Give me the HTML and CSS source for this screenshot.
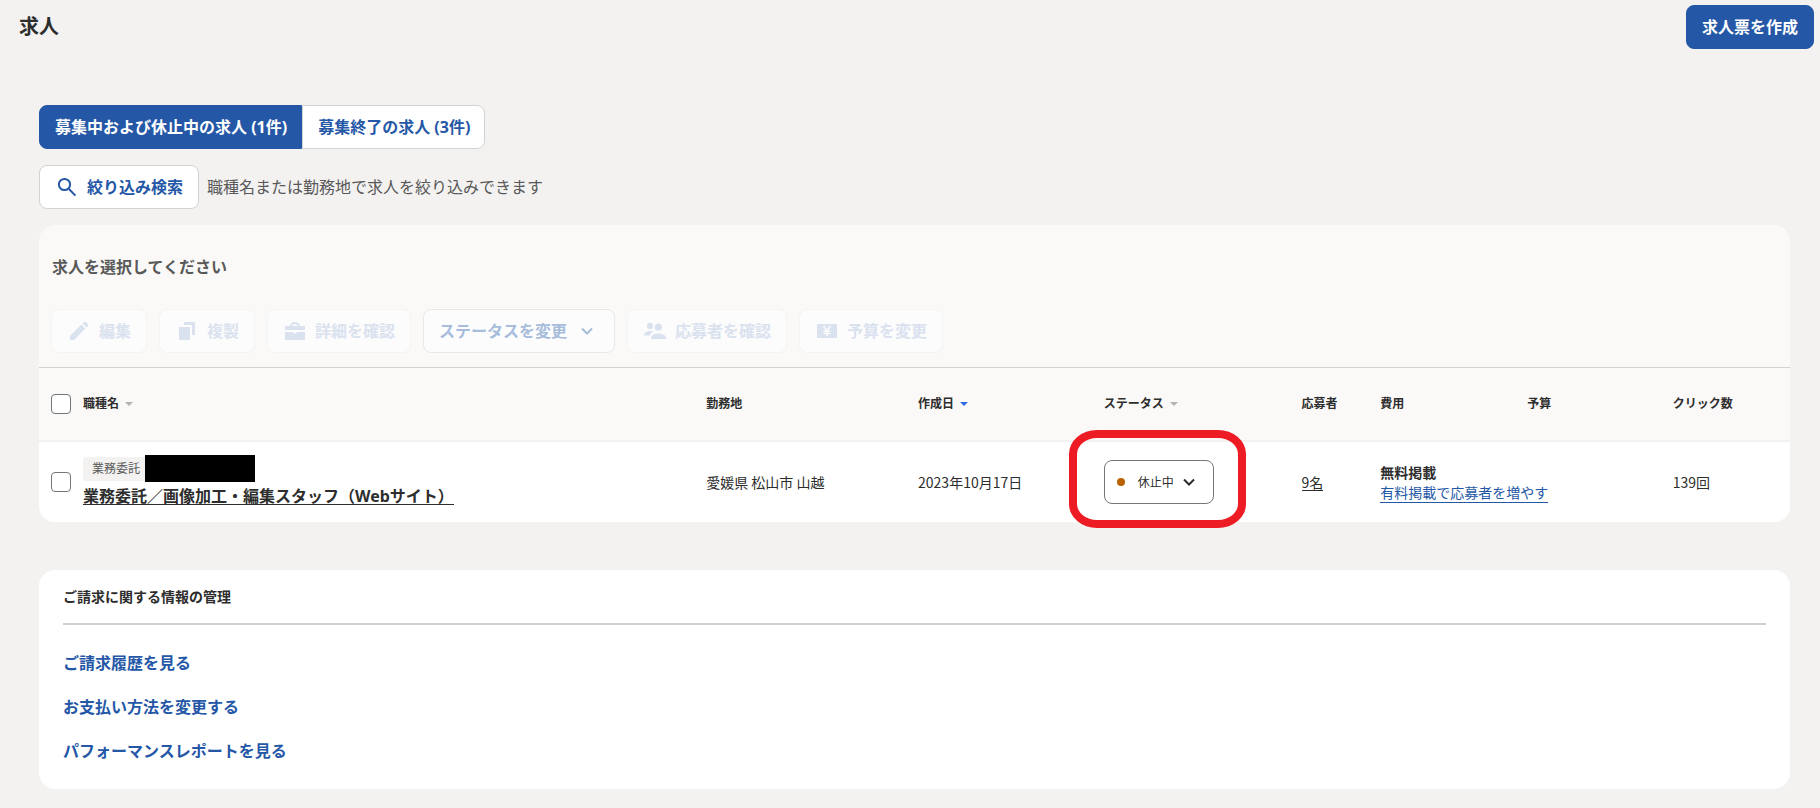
FILE: index.html
```html
<!DOCTYPE html>
<html lang="ja">
<head>
<meta charset="utf-8">
<meta name="viewport" content="width=device-width, initial-scale=1">
<title>求人</title>
<link rel="stylesheet" href="styles.css">
</head>
<body>
<header class="page-header">
  <h1 class="page-title">求人</h1>
  <button type="button" class="btn btn-primary">求人票を作成</button>
</header>
<main class="content">
  <div class="tabs" role="tablist">
    <button type="button" role="tab" aria-selected="true" class="tab tab-active">募集中および休止中の求人 (1件)</button>
    <button type="button" role="tab" aria-selected="false" class="tab">募集終了の求人 (3件)</button>
  </div>
  <div class="filter">
    <button type="button" class="btn btn-search">
      <svg class="icon-search" viewBox="0 0 20 20" aria-hidden="true"><circle cx="7.5" cy="7.5" r="5.6"/><path d="M11.7 11.7 18.4 18.6"/></svg>
      絞り込み検索
    </button>
    <p class="filter-hint">職種名または勤務地で求人を絞り込みできます</p>
  </div>

  <section class="jobs">
    <h2 class="jobs-title">求人を選択してください</h2>
    <div class="toolbar">
      <button type="button" class="btn btn-tool" disabled>
        <svg class="icon" viewBox="0 0 20 20" aria-hidden="true"><path d="M1 19v-4L12.4 3.600l4 4L5 19zM13.600 2.400l1.400-1.400q.9-.8 1.800 0l2.200 2.200q.8.9 0 1.800L17.600 6.400z"/></svg>編集
      </button>
      <button type="button" class="btn btn-tool" disabled>
        <svg class="icon" viewBox="0 0 20 20" aria-hidden="true"><path d="M2 6h11v13H2zM7 1h11v13h-3V4H7z"/></svg>複製
      </button>
      <button type="button" class="btn btn-tool" disabled>
        <svg class="icon" viewBox="0 0 20 20" aria-hidden="true"><path d="M0 5h5c.6-2.400 2.400-4 5-4s4.400 1.600 5 4h5v4H0zM7 5h6c-.5-1.300-1.500-2-3-2s-2.500.7-3 2zM0 11h8c.2.900 1 1.500 2 1.500s1.800-.6 2-1.500h8V19H0z" fill-rule="evenodd"/></svg>詳細を確認
      </button>
      <button type="button" class="btn btn-tool btn-status" disabled aria-haspopup="menu">ステータスを変更
        <svg class="icon-menu" viewBox="0 0 12 8" aria-hidden="true"><path d="M1 1.500 6 6.500 11 1.500"/></svg>
      </button>
      <button type="button" class="btn btn-tool" disabled>
        <svg class="icon" viewBox="0 0 20 20" aria-hidden="true"><ellipse cx="5" cy="5" rx="3" ry="3.200"/><circle cx="13.300" cy="6.200" r="3.600"/><path d="M-1 14.500C-.8 11.500 1.500 9.900 5 9.900q2.200 0 4 .7C7 11.400 5.500 12.600 4.800 14.500zM6 18v-1.500C6.800 13.900 9.500 12.600 13.500 12.600s6.800 1.300 7.500 3.900V18z"/></svg>応募者を確認
      </button>
      <button type="button" class="btn btn-tool" disabled>
        <svg class="icon" viewBox="0 0 20 20" aria-hidden="true"><path d="M0 3h20v14H0z"/><path class="yen" d="M6.500 5 10 10l3.500-5M10 10v5M6.500 10.200h7M6.500 12.600h7"/></svg>予算を変更
      </button>
    </div>
    <table class="job-table">
      <colgroup><col class="col-check"><col><col class="col-place"><col class="col-date"><col class="col-status"><col class="col-people"><col class="col-cost"><col class="col-budget"><col class="col-clicks"></colgroup>
      <thead>
        <tr>
          <th class="cell-check"><input type="checkbox" class="check" aria-label="すべて選択"></th>
          <th>職種名<span class="sort"></span></th>
          <th>勤務地</th>
          <th>作成日<span class="sort sort-active"></span></th>
          <th>ステータス<span class="sort"></span></th>
          <th>応募者</th>
          <th>費用</th>
          <th>予算</th>
          <th>クリック数</th>
        </tr>
      </thead>
      <tbody>
        <tr>
          <td class="cell-check"><input type="checkbox" class="check" aria-label="求人を選択"></td>
          <td class="cell-job">
            <div class="labels"><span class="tag">業務委託</span><span class="redacted"></span></div>
            <a href="#" class="job-link">業務委託／画像加工・編集スタッフ（Webサイト）</a>
          </td>
          <td>愛媛県 松山市 山越</td>
          <td>2023年10月17日</td>
          <td>
            <div class="status">
              <span class="status-dot"></span>
              <select class="status-select" aria-label="ステータス"><option>休止中</option></select>
              <svg class="status-arrow" viewBox="0 0 12 8" aria-hidden="true"><path d="M1 1.500 6 6.500 11 1.500"/></svg>
              <span class="highlight"></span>
            </div>
          </td>
          <td><a href="#" class="people-link">9名</a></td>
          <td><div class="cost"><strong>無料掲載</strong><a href="#" class="cost-link">有料掲載で応募者を増やす</a></div></td>
          <td></td>
          <td>139回</td>
        </tr>
      </tbody>
    </table>
  </section>

  <section class="billing">
    <h2 class="billing-title">ご請求に関する情報の管理</h2>
    <ul class="billing-links">
      <li><a href="#">ご請求履歴を見る</a></li>
      <li><a href="#">お支払い方法を変更する</a></li>
      <li><a href="#">パフォーマンスレポートを見る</a></li>
    </ul>
  </section>
</main>
</body>
</html>
```

FILE: styles.css
```css
* { box-sizing: border-box; }

body {
  margin: 0;
  background: #f3f2f1;
  color: #2d2d2d;
  font-family: "Noto Sans", "Noto Sans CJK JP", sans-serif;
  font-size: 14px;
  line-height: 20px;
}

button, select, input { font: inherit; margin: 0; }
h1, h2, p, ul { margin: 0; padding: 0; }

.page-header {
  display: flex;
  align-items: center;
  justify-content: space-between;
  padding: 5px 6px 0 19px;
}
.page-title { font-size: 20px; line-height: 28px; font-weight: 700; }

.btn {
  display: inline-flex;
  align-items: center;
  height: 44px;
  padding: 0 15px;
  border: 1px solid #d4d2d0;
  border-radius: 8px;
  background: #fff;
  color: #2557a7;
  font-size: 16px;
  font-weight: 700;
  line-height: 24px;
  white-space: nowrap;
}
.btn-primary { background: #2557a7; border-color: #2557a7; color: #fff; }

.content { padding: 56px 30px 19px 39px; }

.tabs { display: flex; }
.tab {
  height: 44px;
  padding: 0 14px 0 15px;
  border: 1px solid #d4d2d0;
  background: #fff;
  color: #2557a7;
  font-size: 16px;
  font-weight: 700;
}
.tab:first-child { border-radius: 8px 0 0 8px; }
.tab:last-child { border-radius: 0 8px 8px 0; }
.tab-active { background: #2557a7; border-color: #2557a7; color: #fff; }

.filter { display: flex; align-items: center; gap: 8px; margin: 16px 0; }
.btn-search { gap: 10px; padding: 0 15px 0 17px; }
.icon-search { width: 20px; height: 20px; fill: none; stroke: #2557a7; stroke-width: 2; }
.filter-hint { font-size: 16px; line-height: 24px; color: #595959; }

.jobs { border-radius: 16px; background: #faf9f8; }
.jobs-title {
  padding: 30px 13px 0;
  font-size: 16px;
  line-height: 24px;
  font-weight: 700;
  color: #595959;
}
.toolbar {
  display: flex;
  flex-wrap: wrap;
  gap: 12px;
  padding: 30px 12px 14px;
  border-bottom: 1px solid #d4d2d0;
}
.btn-tool { gap: 10px; background: #fcfcfc; border-color: #f5f4f3; color: #dae2ef; padding: 0 15px 0 17px; }
.icon { width: 20px; height: 20px; fill: #dae2ef; overflow: visible; }
.yen { fill: none; stroke: #fcfcfc; stroke-width: 1.5; }
.btn-status { gap: 14px; padding: 0 21px 0 15px; border-color: #e9e8e7; color: #a8bcdc; }
.icon-menu { width: 12px; height: 8px; fill: none; stroke: #a8bcdc; stroke-width: 2; }

.job-table { width: 100%; table-layout: fixed; border-collapse: separate; border-spacing: 0; }
.col-check { width: 44px; }
.col-place { width: 12.1%; }
.col-date { width: 10.6%; }
.col-status { width: 11.3%; }
.col-people { width: 4.5%; }
.col-cost { width: 8.4%; }
.col-budget { width: 8.3%; }
.col-clicks { width: 6.7%; }
.job-table th {
  height: 74px;
  padding: 0;
  border-bottom: 2px solid #f3f2f1;
  text-align: left;
  font-size: 12px;
  font-weight: 700;
  white-space: nowrap;
}
.job-table td {
  height: 80px;
  padding: 0;
  background: #fff;
  font-family: "Noto Sans CJK JP", sans-serif;
  white-space: nowrap;
}
.job-table td:first-child { border-bottom-left-radius: 16px; }
.job-table td:last-child { border-bottom-right-radius: 16px; }
.job-table .cell-check { padding-left: 12px; }
.job-table .cell-job { font-family: "Noto Sans", "Noto Sans CJK JP", sans-serif; }

.check {
  display: block;
  appearance: none;
  width: 20px;
  height: 20px;
  border: 1px solid #767676;
  border-radius: 4px;
  background: #fff;
}
.check:checked { background: #2557a7; }

.sort {
  display: inline-block;
  margin-left: 6px;
  border: 4px solid transparent;
  border-top-color: #b4b2b1;
  border-bottom: 0;
  vertical-align: 2px;
}
.sort-active { border-top-color: #2d6adf; }

.labels { display: flex; align-items: center; height: 28px; margin-bottom: 5px; }
.tag {
  padding: 0 5px 0 9px;
  border-radius: 4px 0 0 4px;
  background: #f3f2f1;
  color: #595959;
  font-size: 12px;
  line-height: 24px;
}
.redacted { width: 110px; height: 27px; background: #000; }
.job-link {
  display: block;
  width: fit-content;
  margin-bottom: 5px;
  border-bottom: 1px solid #2d2d2d;
  color: #2d2d2d;
  font-size: 16px;
  line-height: 16px;
  font-weight: 700;
  text-decoration: none;
}

.status { position: relative; display: inline-block; vertical-align: middle; }
.status-select {
  display: block;
  appearance: none;
  width: 110px;
  height: 44px;
  padding: 0 30px 0 33px;
  border: 1px solid #767676;
  border-radius: 8px;
  background: #fff;
  color: #2d2d2d;
  font-size: 12px;
}
.status-dot {
  position: absolute;
  top: 18px;
  left: 13px;
  width: 8px;
  height: 8px;
  border-radius: 50%;
  background: #b86200;
}
.status-arrow {
  position: absolute;
  top: 18px;
  right: 19px;
  width: 12px;
  height: 8px;
  fill: none;
  stroke: #2d2d2d;
  stroke-width: 2;
  pointer-events: none;
}
.highlight {
  position: absolute;
  top: -30px;
  right: -32px;
  bottom: -24px;
  left: -35px;
  border: 8px solid #ed1c24;
  border-radius: 28px / 24px;
  pointer-events: none;
}

.people-link {
  display: inline-block;
  border-bottom: 1px solid #2d2d2d;
  color: #2d2d2d;
  line-height: 15px;
  text-decoration: none;
}
.cost { display: flex; flex-direction: column; align-items: flex-start; }
.cost-link { border-bottom: 1px solid #2557a7; color: #2557a7; text-decoration: none; }

.billing { margin-top: 48px; padding: 16px 24px; border-radius: 16px; background: #fff; }
.billing-title {
  padding-bottom: 16px;
  border-bottom: 2px solid #d0d0d0;
  font-size: 14px;
  line-height: 21px;
  font-weight: 700;
}
.billing-links { padding-top: 16px; list-style: none; }
.billing-links a {
  display: inline-block;
  color: #2557a7;
  font-size: 16px;
  font-weight: 700;
  line-height: 44px;
  text-decoration: none;
}
.billing-links li { height: 44px; }
```
